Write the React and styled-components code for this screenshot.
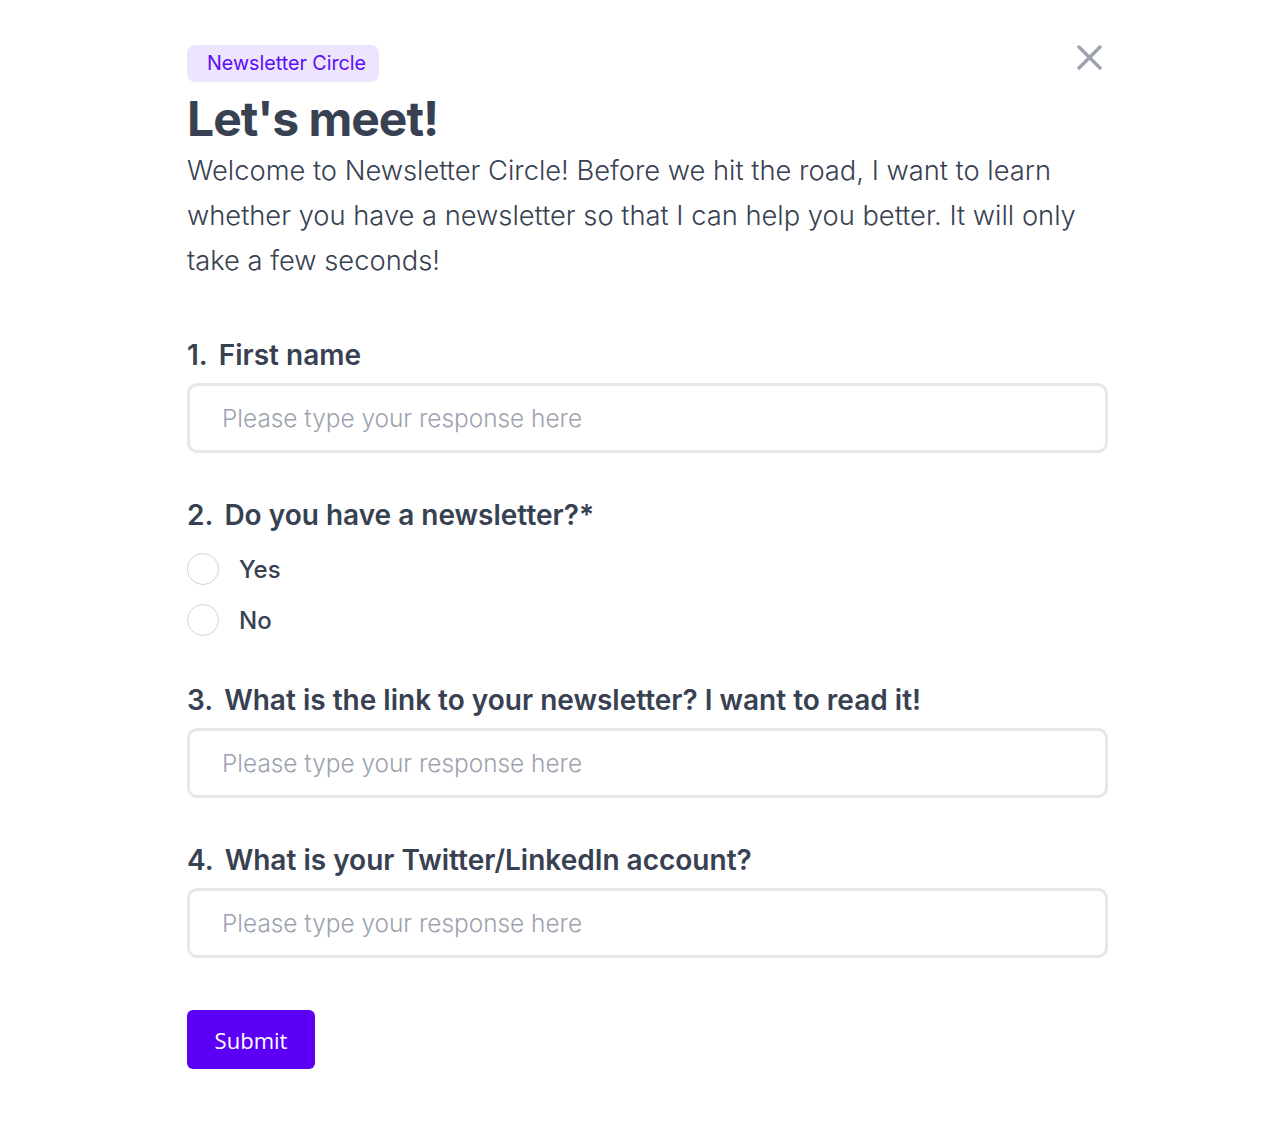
import React from "react"
import styled, { createGlobalStyle } from "styled-components"

const GlobalStyle = createGlobalStyle`
  body {
    margin: 0;
    background: #fff;
    font-family: Inter, "Liberation Sans", sans-serif;
    color: #374151;
  }
`

const questions = [
  { n: 1, label: "First name", type: "text" },
  { n: 2, label: "Do you have a newsletter?*", type: "radio", options: ["Yes", "No"] },
  { n: 3, label: "What is the link to your newsletter? I want to read it!", type: "text" },
  { n: 4, label: "What is your Twitter/LinkedIn account?", type: "text" },
]

const App = () => (
  <Page>
    <GlobalStyle />
    <Form>
      <Header>
        <Badge>Newsletter Circle</Badge>
        <Close aria-label="Close">
          <svg width="26" height="26" viewBox="0 0 26 26" fill="none" stroke="#9ca3af" strokeWidth="3.4" strokeLinecap="round">
            <path d="M3 2L24 23M24 2L3 23" />
          </svg>
        </Close>
      </Header>
      <Title>Let's meet!</Title>
      <Intro>
        Welcome to Newsletter Circle! Before we hit the road, I want to learn whether you have a
        newsletter so that I can help you better. It will only take a few seconds!
      </Intro>
      <Questions>
        {questions.map(q => (
          <Question key={q.n}>
            <Label>
              <Num>{q.n}.</Num>
              {q.label}
            </Label>
            {q.type === "text" ? (
              <Input placeholder="Please type your response here" />
            ) : (
              <Options>
                {q.options.map(o => (
                  <Option key={o}>
                    <Radio />
                    {o}
                  </Option>
                ))}
              </Options>
            )}
          </Question>
        ))}
      </Questions>
      <Submit>Submit</Submit>
    </Form>
  </Page>
)

const Page = styled.div`
  padding: 45px 0 60px 187px;
`
const Form = styled.div`
  width: 921px;
  display: flex;
  flex-direction: column;
`
const Header = styled.div`
  display: flex;
  justify-content: space-between;
  align-items: flex-start;
`
const Badge = styled.span`
  background: #ede5fe;
  color: #5b0df5;
  font-size: 19.7px;
  line-height: 37px;
  height: 37px;
  padding: 0 13px 0 20px;
  border-radius: 8px;
`
const Close = styled.button`
  border: none;
  background: none;
  padding: 0;
  margin: 0 6px 0 0;
  line-height: 0;
  cursor: pointer;
`
const Title = styled.h1`
  margin: 8px 0 0;
  font-size: 48px;
  line-height: 58px;
  font-weight: 700;
  letter-spacing: -1px;
  color: #374151;
`
const Intro = styled.p`
  margin: 0;
  font-size: 27.3px;
  line-height: 45px;
  font-weight: 300;
  color: #374151;
`
const Questions = styled.div`
  margin-top: 56px;
  display: flex;
  flex-direction: column;
  gap: 46px;
`
const Question = styled.div`
  display: flex;
  flex-direction: column;
  gap: 12px;
`
const Label = styled.div`
  font-size: 28px;
  line-height: 32px;
  font-weight: 600;
  color: #374151;
`
const Num = styled.span`
  margin-right: 11px;
`
const Input = styled.input`
  box-sizing: border-box;
  width: 100%;
  height: 70px;
  border: 3px solid #e5e7eb;
  border-radius: 10px;
  padding: 0 32px;
  font-family: Inter, "Liberation Sans", sans-serif;
  font-size: 24.4px;
  font-weight: 300;
  color: #374151;
  outline: none;
  &::placeholder {
    color: #9ca3af;
  }
`
const Options = styled.div`
  display: flex;
  flex-direction: column;
  gap: 19px;
  margin-top: 10px;
  margin-bottom: 2px;
`
const Option = styled.label`
  display: flex;
  align-items: center;
  gap: 20px;
  font-size: 24px;
  font-weight: 500;
  color: #374151;
`
const Radio = styled.span`
  box-sizing: border-box;
  width: 32px;
  height: 32px;
  border: 1px solid #d1d5db;
  border-radius: 50%;
`
const Submit = styled.button`
  align-self: flex-start;
  margin-top: 52px;
  width: 128px;
  height: 59px;
  border: none;
  border-radius: 6px;
  background: #5b00f5;
  color: #fff;
  font-family: "Open Sans", sans-serif;
  font-size: 22px;
  cursor: pointer;
`

export default App
